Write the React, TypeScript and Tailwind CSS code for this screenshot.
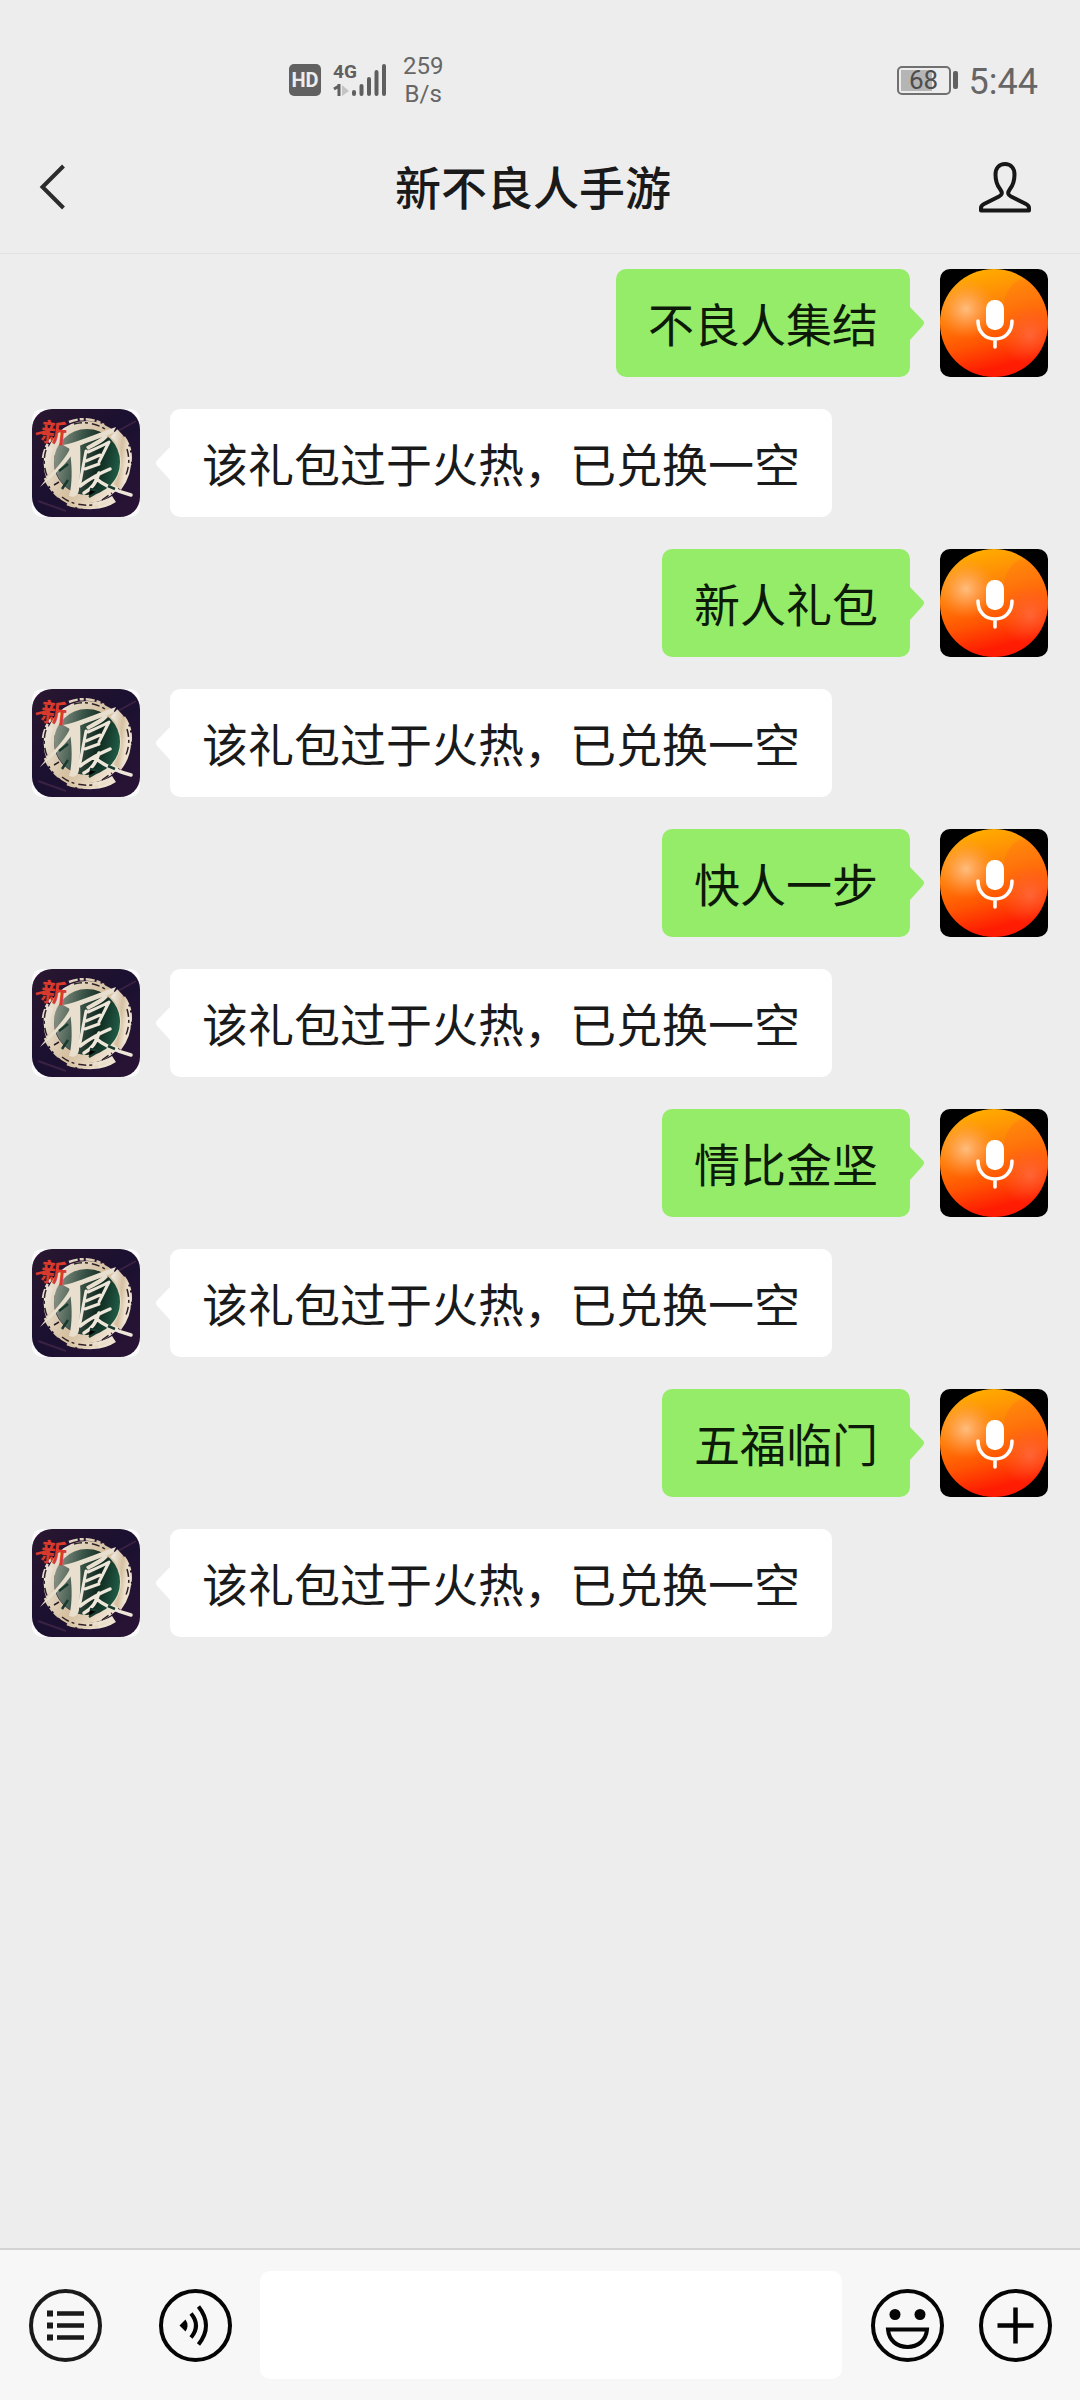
import { useId } from "react";

type Message = { from: "me" | "account"; text: string };

const REPLY = "该礼包过于火热，已兑换一空";

const messages: Message[] = ["不良人集结", "新人礼包", "快人一步", "情比金坚", "五福临门"].flatMap(
  (text): Message[] => [
    { from: "me", text },
    { from: "account", text: REPLY },
  ],
);

function SignalIcon() {
  return (
    <svg width="54" height="48" viewBox="0 -7 54 48" aria-hidden="true">
      <text x="0" y="15" fontSize="19" fontWeight="700" fontFamily="Roboto, sans-serif" fill="#5f5f5f">
        4G
      </text>
      <path d="M6 21v12M6 23L1 26" stroke="#5f5f5f" strokeWidth="3" fill="none" />
      <path d="M9 22l7 6-7 5z" fill="#c4c4c4" />
      <g stroke="#5f5f5f" strokeWidth="4" strokeLinecap="round">
        <path d="M21 29v2M28.500 23v8M36 16v15M43.500 9v22M51 3v28" />
      </g>
    </svg>
  );
}

function StatusBar() {
  return (
    <div className="flex h-[125px] items-center justify-between pt-[35px] pr-[42px] pl-[289px] font-[Roboto,sans-serif] text-[#666666]">
      <div className="flex items-center">
        <span className="flex h-8 w-8 items-center justify-center rounded-[5px] bg-[#616161] font-[Roboto,sans-serif] text-[20px] font-bold text-[#ededed]">
          HD
        </span>
        <span className="ml-3">
          <SignalIcon />
        </span>
        <span className="ml-4 text-center text-[24px] leading-7">
          259
          <br />
          B/s
        </span>
      </div>
      <div className="flex items-center">
        <span className="flex h-[29px] w-[54px] rounded-[5px] border-2 border-[#707070] p-[2px]">
          <span className="flex w-full items-center justify-center bg-linear-to-r from-[#b5b5b5] from-68% to-transparent to-68% text-[26px] leading-none text-[#4d4d4d]">
            68
          </span>
        </span>
        <span className="ml-[2px] h-[18px] w-[5px] rounded-[2px] bg-[#616161]" />
        <time className="ml-[11px] pt-1 text-[36px] leading-none">5:44</time>
      </div>
    </div>
  );
}

function Header() {
  return (
    <header className="flex h-[129px] items-center justify-between border-b border-[#e2e2e2] pr-[48px] pb-1 pl-[36px]">
      <button type="button" aria-label="返回" className="flex w-[52px]">
        <svg width="32" height="50" viewBox="0 0 32 50" fill="none" stroke="#2c2c2c" strokeWidth="4">
          <path d="M27.500 4L6.500 25l21 21" />
        </svg>
      </button>
      <h1 className="pb-1 text-[46px] leading-[60px] font-medium text-[#1a1a1a]">新不良人手游</h1>
      <button type="button" aria-label="账号资料" className="flex">
        <svg width="54" height="52" viewBox="0 0 54 52" fill="none" stroke="#171717" strokeWidth="4" strokeLinejoin="round">
          <path d="M27 3c-6 0-9.500 4.500-9.500 10.500 0 6.500 1 10 4.500 14.500 3 4 2 6-1 7.500L6 43c-2 1-3 2-3 4v2.500h48V47c0-2-1-3-3-4l-15-7.500c-3-1.500-4-3.500-1-7.500 3.500-4.500 4.500-8 4.500-14.500C36.500 7.500 33 3 27 3z" />
        </svg>
      </button>
    </header>
  );
}

function MicAvatar() {
  const id = useId();
  return (
    <svg className="size-[108px] shrink-0 rounded-[10px]" viewBox="0 0 108 108" role="img" aria-label="我的头像">
      <defs>
        <linearGradient id={`${id}base`} x1="0.35" y1="0" x2="0.6" y2="1">
          <stop offset="0" stopColor="#ffad00" />
          <stop offset="0.35" stopColor="#ff8208" />
          <stop offset="0.65" stopColor="#ff5502" />
          <stop offset="0.9" stopColor="#ff1c02" />
        </linearGradient>
        <radialGradient id={`${id}shine`}>
          <stop offset="0" stopColor="#ffc48c" stopOpacity="0.9" />
          <stop offset="0.4" stopColor="#ffb070" stopOpacity="0.6" />
          <stop offset="1" stopColor="#ff9a40" stopOpacity="0" />
        </radialGradient>
        <radialGradient id={`${id}rose`}>
          <stop offset="0" stopColor="#ff6a42" stopOpacity="0.8" />
          <stop offset="1" stopColor="#ff5a28" stopOpacity="0" />
        </radialGradient>
        <clipPath id={`${id}disc`}>
          <circle cx="54" cy="54" r="54" />
        </clipPath>
      </defs>
      <rect width="108" height="108" fill="#000" />
      <g clipPath={`url(#${id}disc)`}>
        <rect width="108" height="108" fill={`url(#${id}base)`} />
        <circle cx="92" cy="36" r="28" fill="#ff6018" opacity="0.25" />
        <circle cx="90" cy="66" r="30" fill={`url(#${id}rose)`} />
        <circle cx="26" cy="40" r="30" fill={`url(#${id}shine)`} />
      </g>
      <rect x="46" y="31" width="18" height="30" rx="8.500" fill="#fff" />
      <path d="M38 52c0 11 7 18 17 18s17-7 17-18M55 70v8" fill="none" stroke="#fff" strokeWidth="3.600" strokeLinecap="round" />
    </svg>
  );
}

function AccountAvatar() {
  const id = useId();
  return (
    <svg className="size-[108px] shrink-0 rounded-[10px]" viewBox="0 0 108 108" role="img" aria-label="新不良人手游">
      <defs>
        <linearGradient id={`${id}night`} x1="0" y1="0" x2="1" y2="1">
          <stop offset="0" stopColor="#2b1730" />
          <stop offset="0.5" stopColor="#1a1030" />
          <stop offset="1" stopColor="#2c1436" />
        </linearGradient>
        <linearGradient id={`${id}jade`} x1="0" y1="0.4" x2="1" y2="0.6">
          <stop offset="0" stopColor="#8b9487" />
          <stop offset="0.35" stopColor="#3c5549" />
          <stop offset="0.65" stopColor="#10281f" />
          <stop offset="1" stopColor="#23634b" />
        </linearGradient>
        <linearGradient id={`${id}ring`} x1="0" y1="0" x2="1" y2="0.6">
          <stop offset="0" stopColor="#ece6da" />
          <stop offset="0.6" stopColor="#d5bf9f" />
          <stop offset="1" stopColor="#eee2d0" />
        </linearGradient>
      </defs>
      <rect width="108" height="108" fill="#fbfafc" />
      <rect width="108" height="108" rx="20" fill={`url(#${id}night)`} />
      <path d="M86 22L104 12M6 92l28 10" stroke="#3b2142" strokeWidth="2" />
      <circle cx="56" cy="52" r="34" fill={`url(#${id}jade)`} />
      <g fill="none" stroke={`url(#${id}ring)`}>
        <circle cx="55" cy="53" r="37" strokeWidth="8" />
        <path d="M18 38c-8 22 2 46 20 54 14 7 32 6 44-2" strokeWidth="7" />
        <path d="M11 49c1-8 4-14 9-20M13 69c3 8 8 14 14 19M37 13c12-5 27-3 35 3M92 28c6 8 8 18 6 28M35 95c11 5 29 5 43-3" strokeWidth="2.500" strokeDasharray="9 2 4 2" />
        <path d="M82 24c14 12 17 36 3 54" strokeWidth="10" />
      </g>
      <g fill="none" stroke="#2e2126" strokeWidth="1.500">
        <path d="M14 41c-3 9-2 20 2 28M30 88c9 7 20 9 31 8M42 15c12-3 23 0 31 5M95 40c3 10 2 20-2 28M22 76l5-3M70 91l10-7" strokeDasharray="8 3 3 4" />
      </g>
      <g fill="#e9dfce">
        <path d="M31 36C44 34 60 26 84 18l-3 6c-14 6-26 9-36 14C36 54 22 66 8 78c8-11 23-24 30-38z" />
        <path d="M37 38l11-4c1 15 0 34-1 47-1 6-5 8-10 6 3-9 4-30 0-49z" />
        <path d="M54 38c5-4 13-7 20-13l2 3c-5 6-13 9-20 13z" />
      </g>
      <g fill="none" stroke="#eee6d9" strokeLinecap="round" strokeLinejoin="round">
        <path d="M54 42l-6 32M56 43c7-3 14-6 21-10l-10 20M54 52l14-6M53 60l14-5" strokeWidth="3" />
        <path d="M48 77c8-6 18-12 30-17M52 84c6-3 12-9 15-20M62 68c9 8 22 14 37 18" strokeWidth="3.500" />
      </g>
      <path d="M58 80l9 2-10 6M76 77l7 3M27 62l9-7M30 80l6-9" stroke="#173b30" strokeWidth="2.500" />
      <text x="0" y="0" transform="translate(8 32) rotate(6)" fontSize="26" fontWeight="700" fontFamily="'Noto Sans CJK SC', sans-serif" fill="#d83a2c">
        新
      </text>
      <path d="M4 25l12-3" stroke="#d83a2c" strokeWidth="2.500" />
    </svg>
  );
}

function MessageRow({ message }: { message: Message }) {
  const mine = message.from === "me";
  return (
    <li className={mine ? "flex flex-row-reverse gap-[30px]" : "flex gap-[30px]"}>
      {mine ? <MicAvatar /> : <AccountAvatar />}
      <div
        className={
          mine
            ? "relative flex min-h-[108px] items-center rounded-[10px] bg-[#95ec69] px-8 py-4 text-[#0d1a08]"
            : "relative flex min-h-[108px] items-center rounded-[10px] bg-white px-8 py-4 text-[#1a1a1a]"
        }
      >
        <svg
          className={mine ? "absolute top-[38px] left-full" : "absolute top-[38px] right-full -scale-x-100"}
          width="15"
          height="34"
          viewBox="0 0 15 34"
          fill={mine ? "#95ec69" : "#ffffff"}
          aria-hidden="true"
        >
          <path d="M0 0l13 13.500q2 2.500 0 5L0 33z" />
        </svg>
        <p className="pb-[2px] text-[46px] leading-[60px]">{message.text}</p>
      </div>
    </li>
  );
}

function Composer() {
  const button = "flex shrink-0";
  const icon = { width: 73, height: 73, viewBox: "0 0 73 73", fill: "none", stroke: "#050505", strokeWidth: 4 };
  return (
    <form
      className="flex items-center border-t-2 border-[#d3d3d3] bg-[#f7f7f7] pt-[21px] pr-7 pb-[21px] pl-[29px]"
      onSubmit={(event) => event.preventDefault()}
    >
      <button type="button" aria-label="菜单" className={button}>
        <svg {...icon} stroke="#1a1a1a">
          <circle cx="36.500" cy="36.500" r="34.500" />
          <path d="M18 24.500h6M18 36.500h6M18 48.500h6" strokeWidth="6" />
          <path d="M28 24.500h27M28 36.500h27M28 48.500h27" strokeWidth="4.500" />
        </svg>
      </button>
      <button type="button" aria-label="语音" className={`${button} ml-[57px]`}>
        <svg {...icon}>
          <circle cx="36.500" cy="36.500" r="34.500" />
          <path d="M20.500 36.500l6-6q4 6 0 12z" fill="#050505" stroke="none" />
          <path d="M32 24.500q10 12 0 24M39.500 17.500q15 19 0 38" />
        </svg>
      </button>
      <input
        type="text"
        aria-label="输入消息"
        className="ml-7 h-[108px] min-w-0 flex-1 rounded-[10px] bg-white px-6 text-[46px] outline-none"
      />
      <button type="button" aria-label="表情" className={`${button} ml-[29px]`}>
        <svg {...icon}>
          <circle cx="36.500" cy="36.500" r="34.500" />
          <circle cx="24" cy="25.500" r="5.500" fill="#050505" stroke="none" />
          <circle cx="49" cy="25.500" r="5.500" fill="#050505" stroke="none" />
          <path d="M17 40.500h39c-1 11-9 17.500-19.500 17.500S18 51.500 17 40.500z" />
        </svg>
      </button>
      <button type="button" aria-label="更多" className={`${button} ml-[35px]`}>
        <svg {...icon}>
          <circle cx="36.500" cy="36.500" r="34.500" />
          <path d="M18.500 36.500h36M36.500 18.500v36" strokeWidth="4.500" />
        </svg>
      </button>
    </form>
  );
}

export default function App() {
  return (
    <div className="flex min-h-screen flex-col bg-[#ededed] font-['Noto_Sans_CJK_SC',sans-serif]">
      <StatusBar />
      <Header />
      <main className="flex-1 px-8 pt-[15px] pb-4">
        <ul className="flex flex-col gap-8">
          {messages.map((message, index) => (
            <MessageRow key={index} message={message} />
          ))}
        </ul>
      </main>
      <Composer />
    </div>
  );
}
